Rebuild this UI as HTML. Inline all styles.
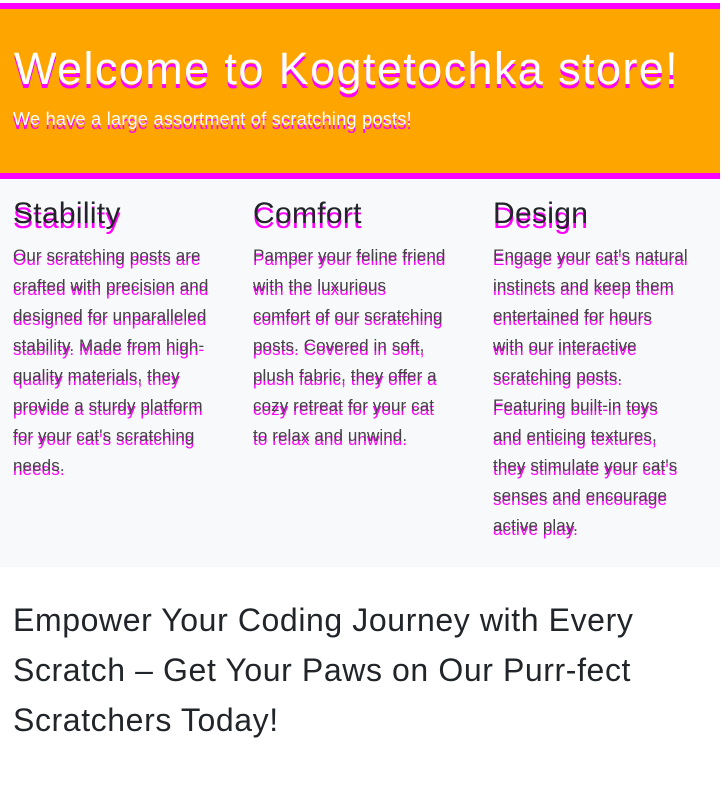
<!DOCTYPE html>
<html><head><style>
body{margin:0;width:722px;height:785px;background:#fff;font-family:"Liberation Sans",sans-serif;color:#212529;overflow:hidden}
.hero{position:absolute;top:3px;left:0;width:720px;height:164px;background:#ffa500;border-top:6px solid #f0f;border-bottom:6px solid #f0f}
.hero h1{position:absolute;left:14px;top:34px;margin:0;font-weight:300;font-size:45px;color:#fff;text-shadow:0 4px 0 #f0f;letter-spacing:1.4px;white-space:nowrap}
.hero p{position:absolute;left:13px;top:100px;margin:0;font-size:18px;color:#fff;text-shadow:0 4px 0 #f0f;white-space:nowrap;letter-spacing:0.3px}
.feat{position:absolute;top:179px;left:0;width:720px;height:388px;background:#f8f9fa}
.col{position:absolute;top:16px;width:226px}
.col h3{margin:0;font-size:30px;font-weight:500;line-height:38px;text-shadow:0 5px 0 #f0f;letter-spacing:0.3px}
.col p{margin:8px 0 0;font-size:17px;line-height:30px;color:#444;text-shadow:0 4px 0 #f0f;letter-spacing:0.1px;white-space:nowrap}
.foot{position:absolute;left:13px;top:595px;width:690px;font-size:32px;line-height:50px;color:#212529;letter-spacing:0.6px}
</style></head><body>
<div class="hero"><h1>Welcome to Kogtetochka store!</h1><p>We have a large assortment of scratching posts!</p></div>
<div class="feat">
<div class="col" style="left:13px"><h3>Stability</h3><p>Our scratching posts are<br>crafted with precision and<br>designed for unparalleled<br>stability. Made from high-<br>quality materials, they<br>provide a sturdy platform<br>for your cat's scratching<br>needs.</p></div>
<div class="col" style="left:253px"><h3>Comfort</h3><p>Pamper your feline friend<br>with the luxurious<br>comfort of our scratching<br>posts. Covered in soft,<br>plush fabric, they offer a<br>cozy retreat for your cat<br>to relax and unwind.</p></div>
<div class="col" style="left:493px"><h3>Design</h3><p>Engage your cat's natural<br>instincts and keep them<br>entertained for hours<br>with our interactive<br>scratching posts.<br>Featuring built-in toys<br>and enticing textures,<br>they stimulate your cat's<br>senses and encourage<br>active play.</p></div>
</div>
<div class="foot">Empower Your Coding Journey with Every Scratch – Get Your Paws on Our Purr-fect Scratchers Today!</div>
</body></html>
